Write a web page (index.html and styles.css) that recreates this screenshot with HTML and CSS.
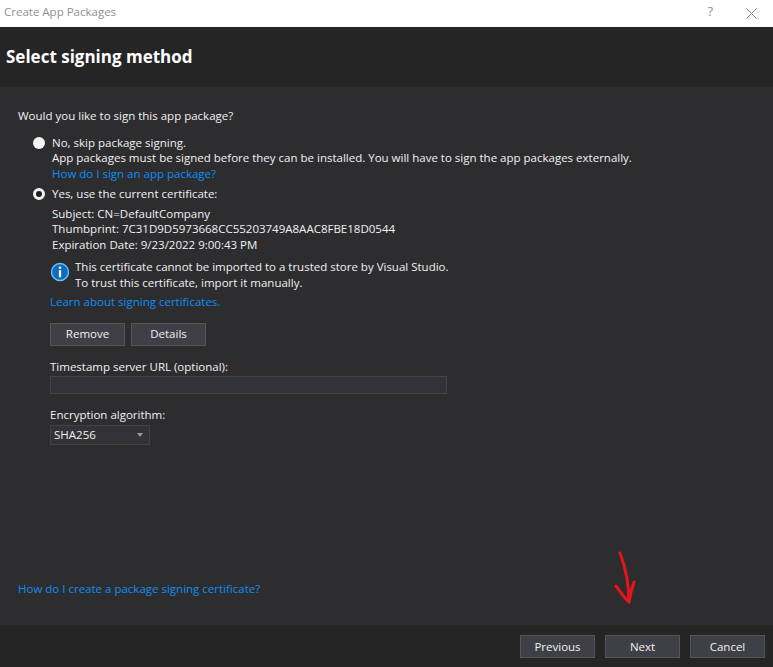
FILE: index.html
```html
<!DOCTYPE html>
<html lang="en">
<head>
<meta charset="utf-8">
<title>Create App Packages</title>
<link rel="stylesheet" href="styles.css">
</head>
<body>
<div class="window">
  <div class="titlebar">
    <span class="title">Create App Packages</span>
    <span class="help">?</span>
    <svg class="close" width="11" height="11" viewBox="0 0 11 11"><path d="M.5.5l10 10M10.5.5l-10 10" stroke="#8a8a8a" fill="none"/></svg>
  </div>
  <header class="header"><h1>Select signing method</h1></header>
  <main class="content">
    <p class="question">Would you like to sign this app package?</p>
    <div class="option first">
      <span class="radio"></span>
      <div class="lines">
        <div>No, skip package signing.</div>
        <div>App packages must be signed before they can be installed. You will have to sign the app packages externally.</div>
        <a class="link">How do I sign an app package?</a>
      </div>
    </div>
    <div class="option second">
      <span class="radio checked"></span>
      <div class="lines">Yes, use the current certificate:</div>
    </div>
    <div class="details">
      <div class="cert">
        <div>Subject: CN=DefaultCompany</div>
        <div>Thumbprint: 7C31D9D5973668CC55203749A8AAC8FBE18D0544</div>
        <div>Expiration Date: 9/23/2022 9:00:43 PM</div>
      </div>
      <div class="notice">
        <svg class="info" width="20" height="20" viewBox="0 0 20 20"><circle cx="10" cy="10" r="8.5" fill="#0f6cbd" stroke="#6ec1f5" stroke-width="1.4"/><circle cx="10" cy="5.8" r="1.3" fill="#fff"/><rect x="8.9" y="8.2" width="2.2" height="7" fill="#fff"/></svg>
        <div class="lines">
          <div>This certificate cannot be imported to a trusted store by Visual Studio.</div>
          <div>To trust this certificate, import it manually.</div>
        </div>
      </div>
      <a class="link learn">Learn about signing certificates.</a>
      <div class="actions">
        <button class="btn">Remove</button>
        <button class="btn">Details</button>
      </div>
      <label class="label timestamp">Timestamp server URL (optional):</label>
      <div class="input"></div>
      <label class="label algorithm">Encryption algorithm:</label>
      <div class="select"><span>SHA256</span><i class="caret"></i></div>
    </div>
    <a class="link bottom">How do I create a package signing certificate?</a>
  </main>
  <footer class="footer">
    <button class="btn">Previous</button>
    <button class="btn">Next</button>
    <button class="btn">Cancel</button>
  </footer>
  <svg class="arrow" width="30" height="60" viewBox="0 0 30 60"><path d="M6 2c5 13 9 28 9 49M2 35c4 5 8 12 13 16 1-7 3-14 5-20" stroke="#e8141c" stroke-width="3" fill="none" stroke-linecap="round" stroke-linejoin="round"/></svg>
</div>
</body>
</html>
```
FILE: styles.css
```css
* { box-sizing: border-box; }
html, body { margin: 0; height: 100%; }
body { background: #2d2d30; }
.window {
  position: relative;
  width: 773px;
  height: 667px;
  display: flex;
  flex-direction: column;
  font: 11.5px/15.5px "Open Sans", "Noto Sans", sans-serif;
  color: #f1f1f1;
  overflow: hidden;
}
.titlebar {
  height: 27px;
  flex: none;
  background: #fff;
  color: #8f8f8f;
  display: flex;
  align-items: center;
  padding: 0 16px 3px 4px;
}
.title { flex: 1; }
.help { font-size: 13px; margin-right: 33px; }
.close { margin-top: 2px; }
.header {
  height: 60px;
  flex: none;
  background: #252526;
  display: flex;
  align-items: center;
  padding-left: 6px;
}
.header h1 { margin: 0; font-size: 17px; font-weight: 700; color: #fff; }
.content {
  flex: 1;
  display: flex;
  flex-direction: column;
  padding: 21px 18px 29px;
}
.question { margin: 0 0 11px; }
.option { display: flex; gap: 7px; margin-left: 15px; }
.second { margin-top: 5px; }
.radio {
  width: 12px;
  height: 12px;
  margin-top: 2px;
  flex: none;
  border-radius: 50%;
  background: #f4f4f4;
}
.radio.checked { background: #1f1f20; border: 3px solid #f4f4f4; }
.link { color: #0e8df0; display: block; }
.details { margin: 4px 0 0 32px; display: flex; flex-direction: column; align-items: flex-start; }
.cert { margin-left: 2px; }
.notice { display: flex; gap: 5px; margin-top: 7px; align-items: flex-start; }
.info { margin-top: 3px; }
.learn { margin-top: 4px; }
.actions { display: flex; gap: 6px; margin-top: 13px; }
.btn {
  width: 75px;
  height: 23px;
  padding: 0;
  background: #3f3f46;
  border: 1px solid #555558;
  color: #f1f1f1;
  font: inherit;
}
.label { display: block; }
.timestamp { margin-top: 13px; }
.input {
  width: 397px;
  height: 18px;
  margin-top: 2px;
  background: #333337;
  border: 1px solid #434346;
}
.algorithm { margin-top: 13px; }
.select {
  width: 100px;
  height: 20px;
  margin-top: 2px;
  padding: 0 6px 0 3px;
  background: #333337;
  border: 1px solid #434346;
  display: flex;
  align-items: center;
  justify-content: space-between;
}
.caret {
  border: 3.5px solid transparent;
  border-top: 4px solid #999;
  border-bottom: 0;
}
.bottom { margin-top: auto; }
.footer {
  height: 42px;
  flex: none;
  background: #252526;
  display: flex;
  justify-content: flex-end;
  gap: 10px;
  padding: 10px 8px 0 0;
}
.arrow { position: absolute; left: 614px; top: 551px; }
```
